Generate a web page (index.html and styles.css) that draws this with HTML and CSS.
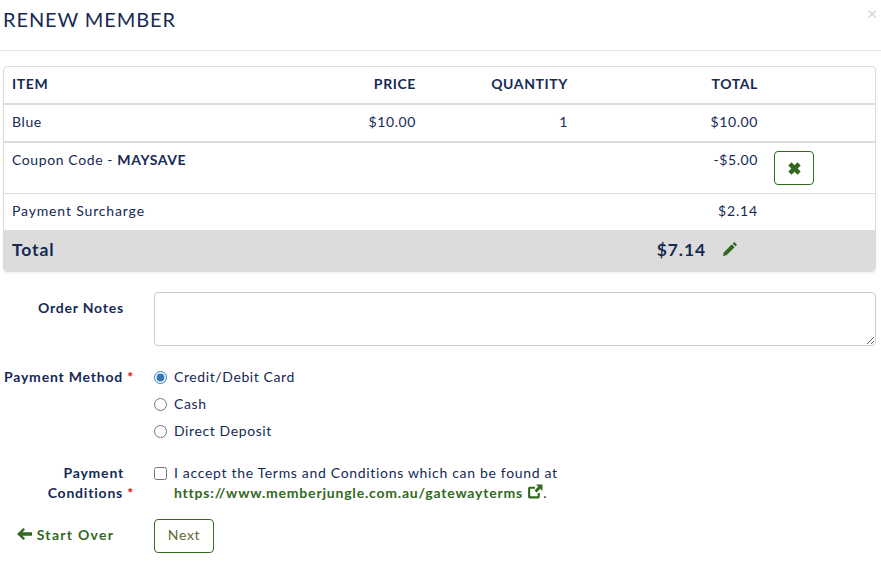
FILE: index.html
```html
<!DOCTYPE html>
<html lang="en">
  <head>
    <meta charset="UTF-8" />
    <title>Renew Member</title>
    <link rel="stylesheet" href="styles.css">
  </head>
  <body>
    <header class="modal-header">
      <h2>RENEW MEMBER</h2>
      <span class="close">&times;</span>
    </header>
    <main class="modal-body">
      <div class="order-card">
        <table class="order-table">
          <colgroup>
            <col class="col-item" />
            <col class="col-price" />
            <col class="col-qty" />
            <col class="col-total" />
            <col />
          </colgroup>
          <thead>
            <tr>
              <th>ITEM</th>
              <th class="num">PRICE</th>
              <th class="num">QUANTITY</th>
              <th class="num">TOTAL</th>
              <th></th>
            </tr>
          </thead>
          <tbody>
            <tr class="row-thick">
              <td>Blue</td>
              <td class="num">$10.00</td>
              <td class="num">1</td>
              <td class="num">$10.00</td>
              <td></td>
            </tr>
            <tr class="row-coupon">
              <td>Coupon Code - <b>MAYSAVE</b></td>
              <td></td>
              <td></td>
              <td class="num">-$5.00</td>
              <td>
                <button class="btn btn-remove" type="button">
                  <svg width="15" height="15" viewBox="0 0 14 14"><path d="M4.200 1.200 7 4l2.800-2.800 3 3L10 7l2.800 2.800-3 3L7 10l-2.800 2.800-3-3L4 7 1.200 4.200z" fill="#33691e"/></svg>
                </button>
              </td>
            </tr>
            <tr class="row-surcharge">
              <td>Payment Surcharge</td>
              <td></td>
              <td></td>
              <td class="num">$2.14</td>
              <td></td>
            </tr>
          </tbody>
          <tfoot>
            <tr>
              <td colspan="3">Total</td>
              <td class="num total-cell">
                $7.14<svg class="pencil" width="15" height="15" viewBox="0 0 16 16"><path d="M1 15l.8-3.800 8.700-8.700 3 3-8.700 8.700zM11.400 1.600l1-1a1 1 0 0 1 1.400 0l1.600 1.600a1 1 0 0 1 0 1.400l-1 1z" fill="#33691e"/></svg>
              </td>
              <td></td>
            </tr>
          </tfoot>
        </table>
      </div>

      <form class="order-form">
        <div class="form-row row-notes">
          <label class="form-label">Order Notes</label>
          <textarea class="notes"></textarea>
        </div>
        <div class="form-row row-method">
          <label class="form-label required">Payment Method</label>
          <div class="options">
            <label class="option"><input type="radio" name="method" checked />Credit/Debit Card</label>
            <label class="option"><input type="radio" name="method" />Cash</label>
            <label class="option"><input type="radio" name="method" />Direct Deposit</label>
          </div>
        </div>
        <div class="form-row row-terms">
          <label class="form-label required">Payment<br />Conditions</label>
          <label class="terms">
            <input type="checkbox" />
            <span>I accept the Terms and Conditions which can be found at<br />
              <a href="#">https://www.memberjungle.com.au/gatewayterms
                <svg class="ext" width="16" height="16" viewBox="0 0 15 14"><path d="M2.500 2H7.500v2H3v7h7V8h2v3.500A1.500 1.500 0 0 1 10.500 13h-8A1.500 1.500 0 0 1 1 11.500v-8A1.500 1.500 0 0 1 2.500 2z" fill="#33691e"/><path d="M8.500 0h6v6l-2-2-3.500 3.500-2-2L10.500 2z" fill="#33691e"/></svg></a>.</span>
          </label>
        </div>
        <div class="form-row row-actions">
          <a class="start-over" href="#">
            <svg width="15" height="12" viewBox="0 0 15 12"><path d="M6.500 0l1.500 1.500L5.500 4.300H15v3.400H5.500L8 10.500 6.500 12 0 6z" fill="#33691e"/></svg>
            Start Over
          </a>
          <button class="btn btn-next" type="button">Next</button>
        </div>
      </form>
    </main>
  </body>
</html>
```

FILE: styles.css
```css
body {
  margin: 0;
  background-color: #fff;
  color: #152a55;
  font-family: "Lato", sans-serif;
  font-size: 14px;
  letter-spacing: 0.6px;
  overflow: hidden;
}

.modal-header {
  display: flex;
  justify-content: space-between;
  height: 50px;
  border-bottom: 1px solid #e5e5e5;
}

.modal-header h2 {
  margin: 7px 0 0 3px;
  font-size: 20px;
  line-height: 24px;
  font-weight: 400;
  letter-spacing: 0.9px;
}

.close {
  margin: 3px 3px 0 0;
  font-size: 18px;
  line-height: 20px;
  color: #d4d4d4;
}

.modal-body {
  padding: 15px 5px 0 3px;
}

.order-card {
  border: 1px solid #ddd;
  border-radius: 4px;
  overflow: hidden;
  box-shadow: 0 1px 2px rgba(0, 0, 0, 0.08);
}

.order-table {
  width: 100%;
  border-collapse: collapse;
  table-layout: fixed;
}

.col-item {
  width: 282px;
}
.col-price {
  width: 138px;
}
.col-qty {
  width: 152px;
}
.col-total {
  width: 190px;
}

.order-table th,
.order-table td {
  padding: 0 8px 2px 8px;
  height: 36px;
  box-sizing: content-box;
  text-align: left;
  vertical-align: middle;
}

.order-table th {
  height: 32px;
  padding-bottom: 4px;
  font-weight: 700;
  border-bottom: 2px solid #ddd;
}

.order-table .num {
  text-align: right;
}

.order-table .row-thick td {
  height: 32px;
  padding-bottom: 4px;
  border-bottom: 2px solid #ddd;
}

.order-table .row-coupon td {
  height: 51px;
  padding-top: 8px;
  padding-bottom: 0;
  vertical-align: top;
  border-bottom: 1px solid #ddd;
  box-sizing: border-box;
}

.order-table .row-surcharge td {
  height: 34px;
  letter-spacing: 0.85px;
}

.order-table tfoot td {
  height: 39px;
  padding-bottom: 2px;
  background-color: #dcdcdc;
  font-size: 17.5px;
  font-weight: 700;
  letter-spacing: 0.9px;
}

.order-table .total-cell {
  white-space: nowrap;
}

.pencil {
  margin-left: 16px;
  margin-right: 21px;
  vertical-align: -1px;
}

.btn {
  background-color: #fff;
  border: 1px solid #33691e;
  border-radius: 4px;
  padding: 0;
  font-family: inherit;
}

.btn-remove {
  display: flex;
  align-items: center;
  justify-content: center;
  width: 40px;
  height: 34px;
}

.order-form {
  padding-top: 20px;
}

.form-row {
  display: flex;
}

.form-label {
  flex: none;
  width: 121px;
  font-weight: 700;
  text-align: right;
  line-height: 20px;
  margin-right: 30px;
  white-space: nowrap;
  letter-spacing: 0.8px;
}

.required::after {
  content: " *";
  color: #e00;
  margin-right: -10px;
}

.row-notes .form-label {
  padding-top: 6px;
}

.notes {
  flex: 1;
  height: 54px;
  box-sizing: border-box;
  border: 1px solid #ccc;
  border-radius: 4px;
  margin: 0;
}

.row-method {
  margin-top: 21px;
}

.options {
  display: flex;
  flex-direction: column;
  gap: 7px;
}

.option {
  display: flex;
  align-items: center;
  line-height: 20px;
}

.option input {
  margin: 1px 7px 0 0;
  width: 13px;
  height: 13px;
  accent-color: #337ab7;
}

.row-terms {
  margin-top: 22px;
}

.terms {
  display: flex;
  line-height: 20px;
  letter-spacing: 0.68px;
}

.terms input {
  margin: 4px 7px 0 0;
  width: 13px;
  height: 13px;
}

.terms a {
  color: #33691e;
  font-weight: 700;
  text-decoration: none;
  letter-spacing: 0.8px;
}

.ext {
  vertical-align: -2px;
}

.row-actions {
  margin-top: 16px;
  align-items: center;
}

.start-over {
  flex: none;
  width: 137px;
  padding-left: 14px;
  margin-top: -2px;
  color: #33691e;
  font-weight: 700;
  text-decoration: none;
  letter-spacing: 1.3px;
}

.btn-next {
  width: 60px;
  height: 34px;
  padding-bottom: 2px;
  color: #5c6b2f;
  font-size: 14px;
  letter-spacing: 0.7px;
}
```
